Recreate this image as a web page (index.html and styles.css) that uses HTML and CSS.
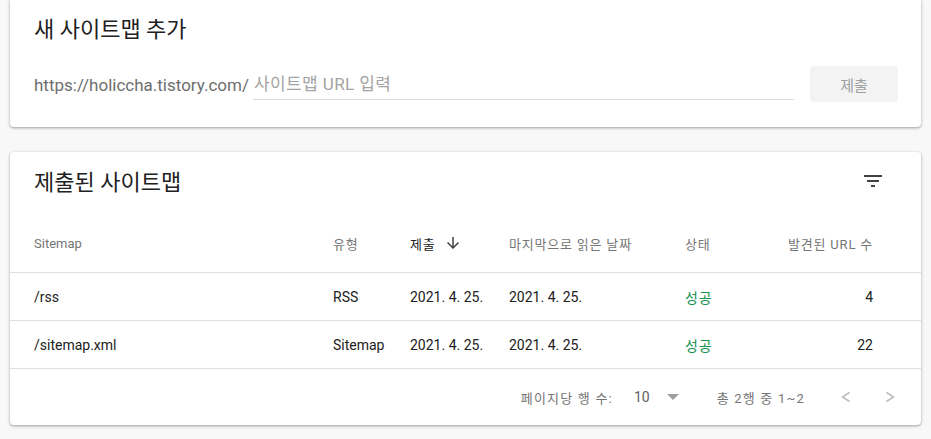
FILE: index.html
```html
<!DOCTYPE html>
<html lang="ko">
<head>
<meta charset="utf-8">
<title>Sitemaps</title>
<link rel="stylesheet" href="styles.css">
</head>
<body>
<section class="card add-card">
  <h2 class="card-title">새 사이트맵 추가</h2>
  <div class="add-row">
    <div class="field">
      <span class="prefix">https://holiccha.tistory.com/</span>
      <input class="url-input" type="text" placeholder="사이트맵 URL 입력">
    </div>
    <button class="submit-btn" type="button">제출</button>
  </div>
</section>

<section class="card list-card">
  <div class="list-head">
    <h2 class="card-title">제출된 사이트맵</h2>
    <svg class="filter-icon" viewBox="0 0 24 24" width="24" height="24"><path d="M10 18h4v-2h-4v2zM3 6v2h18V6H3zm3 7h12v-2H6v2z" fill="#424242"/></svg>
  </div>
  <div class="grid header">
    <div>Sitemap</div>
    <div class="ko">유형</div>
    <div class="sorted ko">제출<svg class="sort-icon" viewBox="0 0 24 24" width="18" height="18"><path d="M20 12l-1.41-1.41L13 16.17V4h-2v12.17l-5.58-5.59L4 12l8 8 8-8z" fill="#424242"/></svg></div>
    <div class="ko">마지막으로 읽은 날짜</div>
    <div class="ko">상태</div>
    <div class="num ko">발견된 URL 수</div>
  </div>
  <div class="grid row">
    <div>/rss</div>
    <div>RSS</div>
    <div>2021. 4. 25.</div>
    <div>2021. 4. 25.</div>
    <div class="ok ko">성공</div>
    <div class="num">4</div>
  </div>
  <div class="grid row">
    <div>/sitemap.xml</div>
    <div>Sitemap</div>
    <div>2021. 4. 25.</div>
    <div>2021. 4. 25.</div>
    <div class="ok ko">성공</div>
    <div class="num">22</div>
  </div>
  <div class="pager">
    <span class="pager-label ko-wide">페이지당 행 수:</span>
    <span class="pager-select">10<svg class="drop" viewBox="0 0 12 6" width="12" height="6"><path d="M0 0h12L6 6z" fill="#9e9e9e"/></svg></span>
    <span class="pager-range ko-wide">총 2행 중 1~2</span>
    <svg class="chev" viewBox="0 0 24 24" width="24" height="24"><polyline points="15.5,7.5 8.5,12 15.5,16.5" fill="none" stroke="#bdbdbd" stroke-width="1.6"/></svg>
    <svg class="chev" viewBox="0 0 24 24" width="24" height="24"><polyline points="8.5,7.5 15.5,12 8.5,16.5" fill="none" stroke="#bdbdbd" stroke-width="1.6"/></svg>
  </div>
</section>
</body>
</html>
```

FILE: styles.css
```css
* { box-sizing: border-box; }

html, body {
  margin: 0;
  padding: 0;
}

body {
  background: #f8f8f8;
  padding: 0 10px 0 10px;
  font-family: Roboto, "Noto Sans CJK KR", sans-serif;
  color: #212121;
  width: 931px;
  height: 439px;
  overflow: hidden;
}

.card {
  background: #fff;
  border-radius: 4px;
  box-shadow: 0 1px 2px 0 rgba(60, 64, 67, .3), 0 1px 3px 1px rgba(60, 64, 67, .15);
}

.card-title {
  margin: 0;
  font-size: 22px;
  font-weight: 400;
  line-height: 28px;
  color: #212121;
}

.ko { letter-spacing: 0.8px; }
.ko-wide { letter-spacing: 1.2px; }

/* first card */
.add-card {
  height: 127px;
  border-radius: 0 0 4px 4px;
  padding: 16px 23px 0 24px;
}

.add-row {
  display: flex;
  align-items: center;
  margin-top: 22px;
  height: 36px;
  gap: 16px;
}

.field {
  flex: 1;
  display: flex;
  align-items: flex-end;
  height: 31px;
  gap: 4px;
}

.prefix {
  font-size: 17px;
  line-height: 30px;
  color: #6e6e6e;
  white-space: nowrap;
}

.url-input {
  flex: 1;
  border: 0;
  border-bottom: 1px solid #dcdcdc;
  outline: none;
  height: 30px;
  padding: 0 0 0 1px;
  font-family: Roboto, "Noto Sans CJK KR", sans-serif;
  font-size: 17px;
  letter-spacing: 0.4px;
  color: #212121;
  background: transparent;
}

.url-input::placeholder {
  color: #a3a3a3;
}

.submit-btn {
  width: 88px;
  height: 36px;
  border: 0;
  border-radius: 4px;
  background: #f3f3f3;
  color: #9e9e9e;
  font-family: Roboto, "Noto Sans CJK KR", sans-serif;
  font-size: 15px;
}

/* second card */
.list-card {
  margin-top: 25px;
  height: 273px;
}

.list-head {
  height: 62px;
  display: flex;
  align-items: center;
  justify-content: space-between;
  padding: 0 36px 0 24px;
}

.filter-icon {
  margin-bottom: 5px;
}

.grid {
  display: grid;
  grid-template-columns: 299px 77px 99px 176px 1fr auto;
  align-items: center;
  padding: 0 48px 0 24px;
  border-bottom: 1px solid #e0e0e0;
}

.grid .num { text-align: right; }

.header {
  height: 59px;
  font-size: 13px;
  color: #757575;
}

.sorted {
  color: #212121;
  display: flex;
  align-items: center;
}

.sort-icon {
  margin-left: 8px;
}

.row {
  height: 48px;
  font-size: 14px;
  color: #212121;
}

.ok {
  color: #12924f;
}

.pager {
  height: 56px;
  display: flex;
  align-items: center;
  justify-content: flex-end;
  padding-right: 19px;
  font-size: 13px;
  color: #757575;
}

.pager-select {
  display: flex;
  align-items: center;
  margin-left: 21px;
  font-size: 14px;
  color: #616161;
}

.drop {
  margin-left: 17px;
}

.pager-range {
  margin-left: 38px;
  margin-right: 29px;
}

.chev + .chev {
  margin-left: 20px;
}
```
